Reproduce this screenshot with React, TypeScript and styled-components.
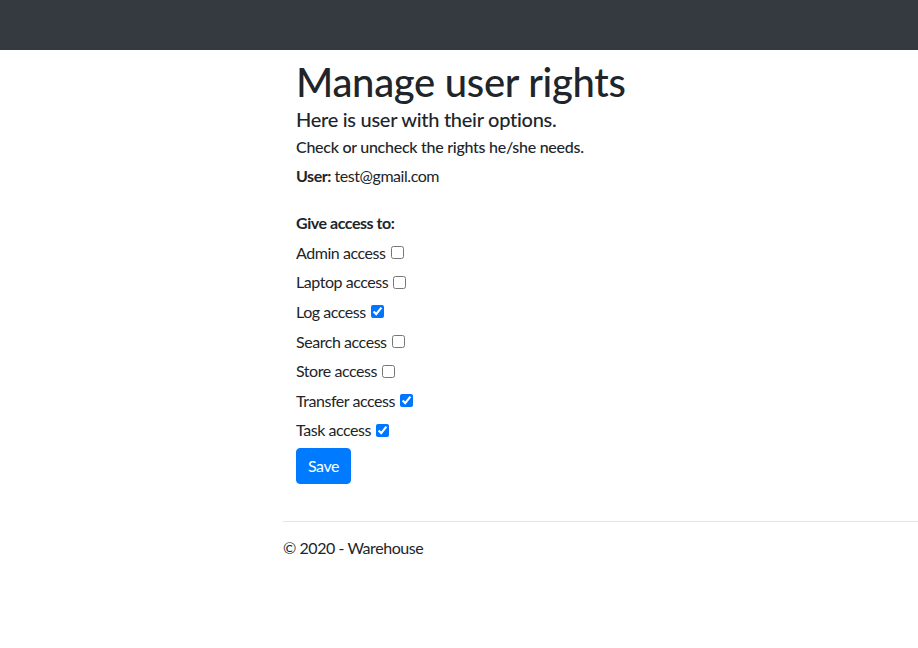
import styled, { createGlobalStyle } from "styled-components";

const GlobalStyle = createGlobalStyle`
  body {
    margin: 0;
    font-family: Lato, Roboto, Arial, sans-serif;
    font-size: 16px;
    line-height: 1.5;
    letter-spacing: -0.45px;
    color: #212529;
    background: #fff;
  }
`;

const Navbar = styled.nav`
  height: 50px;
  background: #343a40;
`;

const Page = styled.div`
  padding-left: 283px;
`;

const Main = styled.main`
  padding: 8px 0 37px 13px;
`;

const Title = styled.h1`
  margin: 0 0 1px;
  font-size: 40px;
  font-weight: 500;
  line-height: 1.2;
  letter-spacing: -0.3px;
`;

const Subtitle = styled.h5`
  margin: 0 0 6px;
  font-size: 20px;
  font-weight: 500;
  line-height: 1.2;
  letter-spacing: -0.28px;
`;

const Hint = styled.h6`
  margin: 0 0 8px;
  font-size: 16px;
  font-weight: 500;
  line-height: 1.2;
  letter-spacing: -0.27px;
`;

const Paragraph = styled.p`
  margin: 0 0 23px;
`;

const Label = styled.strong`
  font-weight: 700;
`;

const AccessList = styled.div`
  display: flex;
  flex-direction: column;
  gap: 5.6px;
  margin-bottom: 6px;
`;

const Row = styled.label`
  display: flex;
  align-items: center;
  gap: 5px;
  height: 24px;
`;

const Check = styled.input`
  width: 13px;
  height: 13px;
  margin: 0;
  accent-color: #0075ff;
`;

const SaveButton = styled.button`
  padding: 6px 11px;
  border: 1px solid #007bff;
  border-radius: 4px;
  background: #007bff;
  color: #fff;
  font-family: inherit;
  font-size: 16px;
  line-height: 22px;
  letter-spacing: inherit;
  cursor: pointer;
`;

const Footer = styled.footer`
  border-top: 1px solid #e5e5e5;
  padding-top: 14px;
  line-height: 24px;
`;

const rights = [
  { name: "Admin access", checked: false },
  { name: "Laptop access", checked: false },
  { name: "Log access", checked: true },
  { name: "Search access", checked: false },
  { name: "Store access", checked: false },
  { name: "Transfer access", checked: true },
  { name: "Task access", checked: true },
];

const App = () => {
  return (
    <>
      <GlobalStyle />
      <Navbar />
      <Page>
        <Main>
          <Title>Manage user rights</Title>
          <Subtitle>Here is user with their options.</Subtitle>
          <Hint>Check or uncheck the rights he/she needs.</Hint>
          <Paragraph>
            <Label>User:</Label> test@gmail.com
          </Paragraph>
          <AccessList>
            <Row as="div">
              <Label>Give access to:</Label>
            </Row>
            {rights.map((r) => (
              <Row key={r.name}>
                {r.name}
                <Check type="checkbox" defaultChecked={r.checked} />
              </Row>
            ))}
          </AccessList>
          <SaveButton>Save</SaveButton>
        </Main>
        <Footer>© 2020 - Warehouse</Footer>
      </Page>
    </>
  );
};

export default App;
